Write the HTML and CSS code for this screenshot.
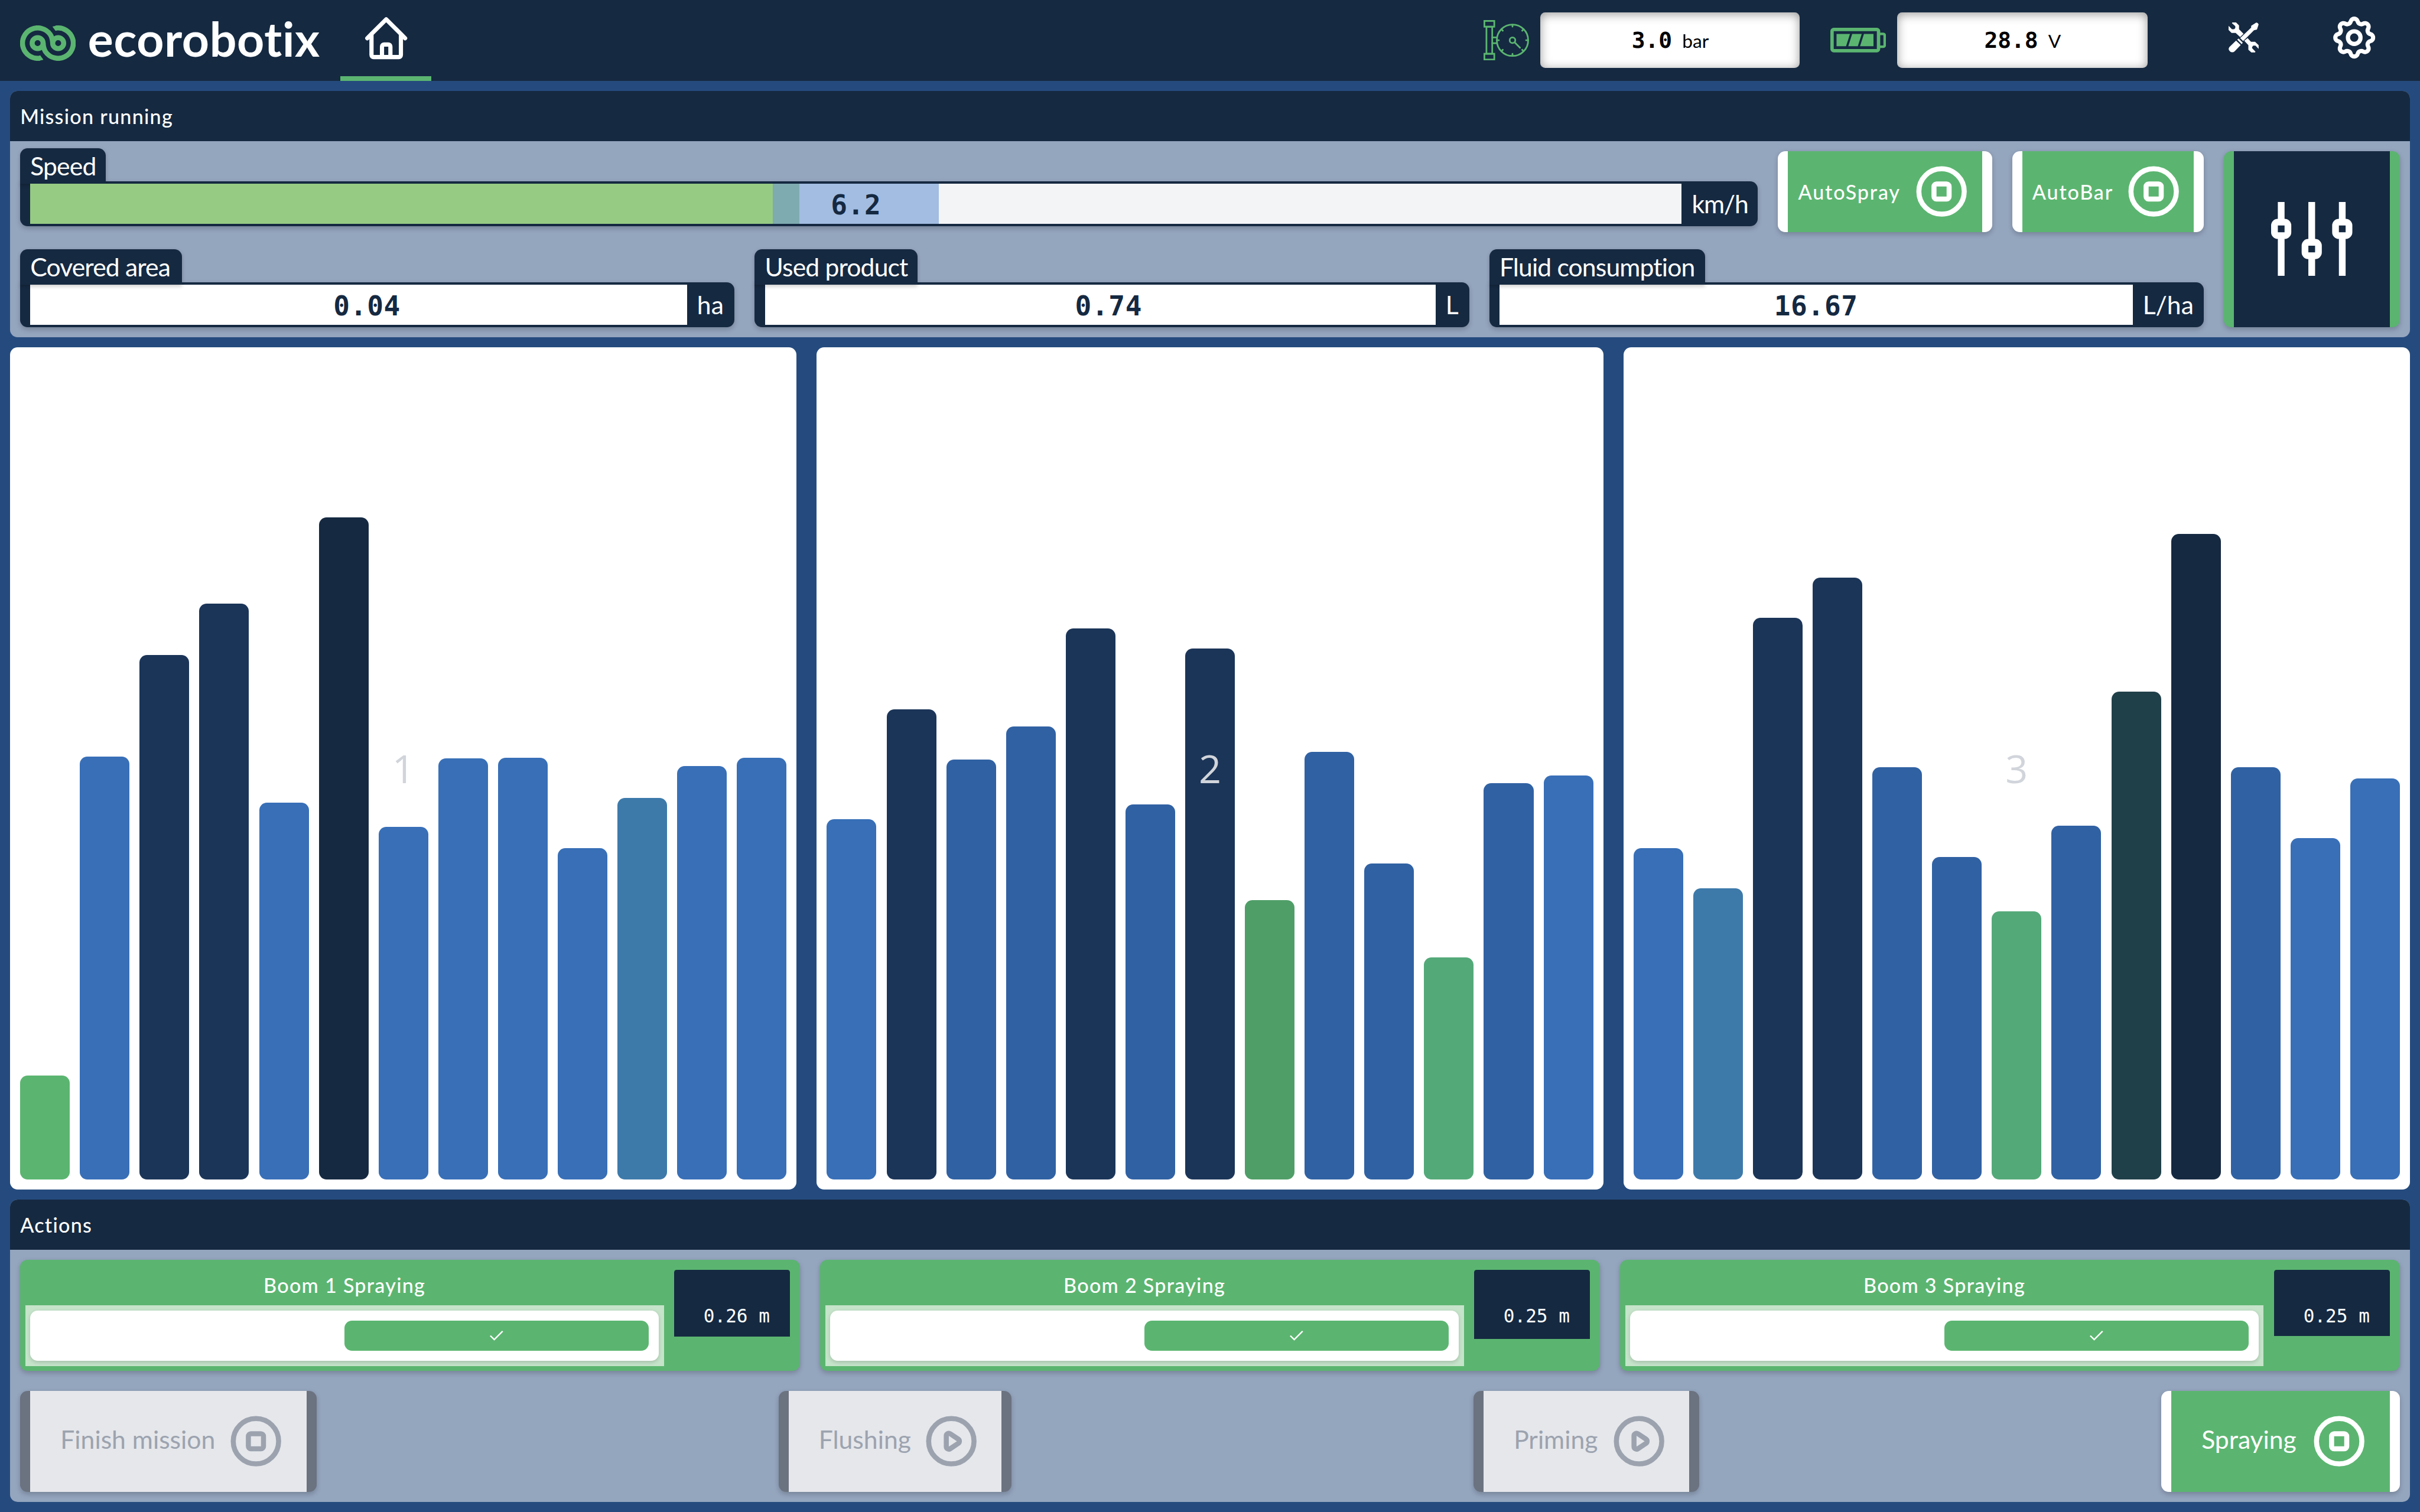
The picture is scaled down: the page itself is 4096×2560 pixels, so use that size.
FILE: index.html
```html
<!DOCTYPE html>
<html lang="en">
<head>
    <meta charset="UTF-8">
    <meta name="viewport" content="width=device-width, initial-scale=1.0">
    <title>ecorobotix</title>
    <link rel="stylesheet" href="styles.css">
</head>
<body>

<!-- shared icons -->
<svg class="sprite" aria-hidden="true">
    <symbol id="icon-stop" viewBox="0 0 24 24">
        <path d="M21 12a9 9 0 11-18 0 9 9 0 0118 0z"/>
        <path d="M9 10a1 1 0 011-1h4a1 1 0 011 1v4a1 1 0 01-1 1h-4a1 1 0 01-1-1v-4z"/>
    </symbol>
    <symbol id="icon-play" viewBox="0 0 24 24">
        <path d="M14.752 11.168l-3.197-2.132A1 1 0 0010 9.87v4.263a1 1 0 001.555.832l3.197-2.132a1 1 0 000-1.664z"/>
        <path d="M21 12a9 9 0 11-18 0 9 9 0 0118 0z"/>
    </symbol>
    <symbol id="icon-check" viewBox="0 0 26 19">
        <path d="M2 10l7 7L24 2"/>
    </symbol>
</svg>

<header class="topbar">
    <div class="logo">
        <svg class="logo-mark" viewBox="0 0 298 190">
            <g fill="none" stroke="currentColor" stroke-width="27">
                <circle cx="94" cy="95" r="29.5"/>
                <circle cx="204" cy="95" r="29.5"/>
                <path d="M106 175.6A81.5 81.5 0 1 1 161 48C170 60 173 76 175 95"/>
                <path d="M192 14.4A81.5 81.5 0 1 1 137 142C128 130 125 114 123 95"/>
            </g>
            <path fill="currentColor" d="M102 189L125 184L108 161L102 162z"/>
            <path fill="currentColor" d="M196 1L173 6L190 29L196 28z"/>
        </svg>
        <span class="logo-text">ecorobotix</span>
    </div>
    <nav class="tab active">
        <svg class="icon" viewBox="0 0 24 24">
            <path d="M3 12l2-2m0 0l7-7 7 7M5 10v10a1 1 0 001 1h3m10-11l2 2m-2-2v10a1 1 0 01-1 1h-3m-6 0a1 1 0 001-1v-4a1 1 0 011-1h2a1 1 0 011 1v4a1 1 0 001 1m-6 0h6"/>
        </svg>
    </nav>

    <div class="status">
        <svg class="gauge" viewBox="0 0 246 216">
            <g fill="none" stroke="currentColor" stroke-width="9" stroke-linecap="round">
                <rect x="4.500" y="4.500" width="53" height="31"/>
                <rect x="15.500" y="35.500" width="31" height="145"/>
                <rect x="4.500" y="180.500" width="53" height="31"/>
                <path d="M47 93h23M47 124h23"/>
                <circle cx="155" cy="108" r="84"/>
                <circle cx="155" cy="108" r="15"/>
                <path d="M166 119l29 29M155 26v9M155 181v9M73 108h9M228 108h9M98 51l5 6M212 51l-5 6M98 165l5-6M212 165l-5-6"/>
            </g>
        </svg>
        <div class="reading reading-bar"><b>3.0</b><span>bar</span></div>
        <svg class="battery" viewBox="0 0 99 44">
            <rect x="3" y="3" width="83" height="38" rx="3" fill="none" stroke="currentColor" stroke-width="6"/>
            <path d="M11 11h24l-7 22H11zM39 11h17l-7 22H32zM60 11h17v22H53z" fill="currentColor"/>
            <path d="M88 11h6q3 0 3 3v17q0 3-3 3h-6" fill="none" stroke="currentColor" stroke-width="4.500"/>
        </svg>
        <div class="reading reading-volt"><b>28.8</b><span>V</span></div>
    </div>
    <svg class="tools" viewBox="0 0 162 162" fill="currentColor">
        <path d="M20 0H40L56 16V36L80 61L62 78L38 56H16L0 40V18L18 36H30L36 30V20L18 4z"/>
        <path d="M84 98L102 84L120 104H142L161 122V142L144 124H132L126 132V138L144 157L142 161H122L106 146V122z"/>
        <path d="M121 18L148 1Q156 0 161 10L152 38L136 42L78 100L62 84L121 28z"/>
        <path d="M46 92L54 86L76 108L70 116z"/>
        <path d="M40 97L65 121L33 154Q22 164 9 157Q-5 146 4 132z"/>
    </svg>
    <svg class="icon gear" viewBox="0 0 24 24">
        <path d="M10.325 4.317c.426-1.756 2.924-1.756 3.350 0a1.724 1.724 0 002.573 1.066c1.543-.94 3.310.826 2.370 2.370a1.724 1.724 0 001.065 2.572c1.756.426 1.756 2.924 0 3.350a1.724 1.724 0 00-1.066 2.573c.94 1.543-.826 3.310-2.370 2.370a1.724 1.724 0 00-2.572 1.065c-.426 1.756-2.924 1.756-3.350 0a1.724 1.724 0 00-2.573-1.066c-1.543.94-3.310-.826-2.370-2.370a1.724 1.724 0 00-1.065-2.572c-1.756-.426-1.756-2.924 0-3.350a1.724 1.724 0 001.066-2.573c-.94-1.543.826-3.310 2.370-2.370.996.608 2.296.07 2.572-1.065z"/>
        <path d="M15 12a3 3 0 11-6 0 3 3 0 016 0z"/>
    </svg>
</header>

<main class="page">
    <section class="panel">
        <h2 class="panel-title">Mission running</h2>
        <div class="mission">
            <div class="mission-data">
                <div class="mission-row">
                    <div class="field field-speed">
                        <div class="field-label label-speed">Speed</div>
                        <div class="field-box">
                            <div class="field-value speed-track">
                                <div class="speed-range" style="width: 55%"></div>
                                <div class="speed-over" style="width: 46.57%"></div>
                                <div class="speed-fill" style="width: 44.98%"></div>
                                <span class="speed-value">6.2</span>
                            </div>
                            <div class="field-unit unit-kmh">km/h</div>
                        </div>
                    </div>
                    <button class="btn btn-green btn-small auto-spray"><span>AutoSpray</span><svg class="btn-icon"><use href="#icon-stop"/></svg></button>
                    <button class="btn btn-green btn-small auto-bar"><span>AutoBar</span><svg class="btn-icon"><use href="#icon-stop"/></svg></button>
                </div>
                <div class="mission-row">
                    <div class="field">
                        <div class="field-label label-area">Covered area</div>
                        <div class="field-box">
                            <div class="field-value"> 0.04</div>
                            <div class="field-unit unit-ha">ha</div>
                        </div>
                    </div>
                    <div class="field">
                        <div class="field-label label-product">Used product</div>
                        <div class="field-box">
                            <div class="field-value"> 0.74</div>
                            <div class="field-unit unit-l">L</div>
                        </div>
                    </div>
                    <div class="field">
                        <div class="field-label label-fluid">Fluid consumption</div>
                        <div class="field-box">
                            <div class="field-value">16.67</div>
                            <div class="field-unit unit-lha">L/ha</div>
                        </div>
                    </div>
                </div>
            </div>
            <button class="btn btn-settings">
                <svg class="sliders" viewBox="0 0 145 132">
                    <g fill="none" stroke="currentColor" stroke-width="12">
                        <path d="M18 0v36M18 60v72M72.500 0v72M72.500 96v36M127 0v36M127 60v72"/>
                        <rect x="6" y="36" width="24" height="24" rx="6"/>
                        <rect x="60.500" y="72" width="24" height="24" rx="6"/>
                        <rect x="115" y="36" width="24" height="24" rx="6"/>
                    </g>
                </svg>
            </button>
        </div>
    </section>

    <section class="charts">
        <div class="chart">
            <div class="bar green" style="height: 12.6%"></div>
            <div class="bar blue" style="height: 51.4%"></div>
            <div class="bar navy" style="height: 63.8%"></div>
            <div class="bar navy" style="height: 70%"></div>
            <div class="bar blue" style="height: 45.8%"></div>
            <div class="bar dark" style="height: 80.5%"></div>
            <div class="bar blue" style="height: 42.9%"></div>
            <div class="bar blue" style="height: 51.2%"></div>
            <div class="bar blue" style="height: 51.3%"></div>
            <div class="bar blue" style="height: 40.3%"></div>
            <div class="bar teal" style="height: 46.4%"></div>
            <div class="bar blue" style="height: 50.3%"></div>
            <div class="bar blue" style="height: 51.3%"></div>
            <span class="chart-number">1</span>
        </div>
        <div class="chart">
            <div class="bar blue" style="height: 43.8%"></div>
            <div class="bar navy" style="height: 57.2%"></div>
            <div class="bar mid" style="height: 51.1%"></div>
            <div class="bar mid" style="height: 55.1%"></div>
            <div class="bar navy" style="height: 67%"></div>
            <div class="bar mid" style="height: 45.6%"></div>
            <div class="bar navy" style="height: 64.6%"></div>
            <div class="bar leaf" style="height: 34%"></div>
            <div class="bar mid" style="height: 52%"></div>
            <div class="bar mid" style="height: 38.4%"></div>
            <div class="bar sea" style="height: 27%"></div>
            <div class="bar mid" style="height: 48.2%"></div>
            <div class="bar blue" style="height: 49.1%"></div>
            <span class="chart-number">2</span>
        </div>
        <div class="chart">
            <div class="bar blue" style="height: 40.3%"></div>
            <div class="bar teal" style="height: 35.4%"></div>
            <div class="bar navy" style="height: 68.3%"></div>
            <div class="bar navy" style="height: 73.2%"></div>
            <div class="bar mid" style="height: 50.1%"></div>
            <div class="bar mid" style="height: 39.2%"></div>
            <div class="bar sea" style="height: 32.6%"></div>
            <div class="bar mid" style="height: 43%"></div>
            <div class="bar pine" style="height: 59.3%"></div>
            <div class="bar dark" style="height: 78.5%"></div>
            <div class="bar mid" style="height: 50.1%"></div>
            <div class="bar blue" style="height: 41.5%"></div>
            <div class="bar blue" style="height: 48.8%"></div>
            <span class="chart-number">3</span>
        </div>
    </section>

    <section class="panel">
        <h2 class="panel-title">Actions</h2>
        <div class="actions">
            <div class="booms">
                <div class="boom">
                    <div class="boom-main">
                        <div class="boom-title">Boom 1 Spraying</div>
                        <div class="boom-switch">
                            <div class="switch"><div class="switch-knob"><svg class="check"><use href="#icon-check"/></svg></div></div>
                        </div>
                    </div>
                    <div class="boom-height" style="height: 66.1%">0.26 m</div>
                </div>
                <div class="boom">
                    <div class="boom-main">
                        <div class="boom-title">Boom 2 Spraying</div>
                        <div class="boom-switch">
                            <div class="switch"><div class="switch-knob"><svg class="check"><use href="#icon-check"/></svg></div></div>
                        </div>
                    </div>
                    <div class="boom-height" style="height: 68.3%">0.25 m</div>
                </div>
                <div class="boom">
                    <div class="boom-main">
                        <div class="boom-title">Boom 3 Spraying</div>
                        <div class="boom-switch">
                            <div class="switch"><div class="switch-knob"><svg class="check"><use href="#icon-check"/></svg></div></div>
                        </div>
                    </div>
                    <div class="boom-height" style="height: 65.5%">0.25 m</div>
                </div>
            </div>
            <div class="commands">
                <button class="btn btn-off finish"><span>Finish mission</span><svg class="btn-icon"><use href="#icon-stop"/></svg></button>
                <button class="btn btn-off flushing"><span>Flushing</span><svg class="btn-icon"><use href="#icon-play"/></svg></button>
                <button class="btn btn-off priming"><span>Priming</span><svg class="btn-icon"><use href="#icon-play"/></svg></button>
                <button class="btn btn-green spraying"><span>Spraying</span><svg class="btn-icon"><use href="#icon-stop"/></svg></button>
            </div>
        </div>
    </section>
</main>

</body>
</html>
```
FILE: styles.css
```css
* {
    box-sizing: border-box;
    margin: 0;
    padding: 0;
}
/* the whole screen scales with the display: 120rem wide */
html {
    font-size: calc(100vw / 120);
}
body {
    font-family: Lato, "Liberation Sans", sans-serif;
    background-color: #254b7e;
    color: #ffffff;
    height: 75rem;
    display: flex;
    flex-direction: column;
    overflow: hidden;
}
.sprite {
    display: none;
}

/* top bar */
.topbar {
    height: 4rem;
    padding: 0 2rem 0 1rem;
    background-color: #152941;
    display: flex;
    align-items: center;
}
.logo {
    width: 15.889rem;
    display: flex;
    align-items: center;
    padding-top: 0.25rem;
}
.logo-mark {
    width: 2.759rem;
    height: 1.759rem;
    color: #5bb570;
}
.logo-text {
    font-size: 2.36rem;
    font-weight: 700;
    letter-spacing: 0.02rem;
    line-height: 1;
    margin-left: 0.6rem;
    margin-bottom: 0.42rem;
    white-space: nowrap;
}
.tab {
    width: 4.5rem;
    height: 4rem;
    display: flex;
    align-items: center;
    justify-content: center;
    border-bottom: 0.25rem solid transparent;
}
.tab.active {
    border-color: #5bb570;
}
.icon {
    width: 2.5rem;
    height: 2.5rem;
    fill: none;
    stroke: currentColor;
    stroke-width: 2;
    stroke-linecap: round;
    stroke-linejoin: round;
}
.status {
    display: flex;
    align-items: center;
    margin-left: auto;
    color: #5bb570;
}
.gauge {
    width: 2.278rem;
    height: 2rem;
    margin-right: 0.55rem;
}
.battery {
    width: 2.75rem;
    height: 1.222rem;
    margin: 0 0.583rem 0 1.5rem;
}
.reading {
    height: 2.75rem;
    border-radius: 0.25rem;
    background-color: #ffffff;
    box-shadow: inset 0 0.083rem 0.5rem rgba(0, 0, 0, 0.4);
    color: #000000;
    display: flex;
    align-items: baseline;
    justify-content: center;
    line-height: 2.8rem;
}
.reading b {
    font-family: "DejaVu Sans Mono", monospace;
    font-size: 1.111rem;
}
.reading span {
    font-size: 0.93rem;
    margin-left: 0.5rem;
}
.reading-bar {
    width: 12.861rem;
}
.reading-volt {
    width: 12.417rem;
}
.tools {
    width: 1.5rem;
    height: 1.5rem;
    margin: -0.25rem 3.5rem 0 4rem;
}
.gear {
    margin-top: -0.25rem;
}

/* panels */
.page {
    flex: 1;
    min-height: 0;
    padding: 0.5rem;
    display: flex;
    flex-direction: column;
    gap: 0.5rem;
}
.panel {
    border-radius: 0.375rem;
    background-color: #94a5be;
    overflow: hidden;
    flex: none;
}
.panel-title {
    height: 2.5rem;
    padding: 0 0.5rem;
    background-color: #152941;
    font-size: 1rem;
    font-weight: 500;
    letter-spacing: 0.037rem;
    line-height: 2.5rem;
}

/* mission */
.mission {
    padding: 0.5rem;
    display: flex;
    gap: 1rem;
}
.mission-data {
    flex: 1;
    display: flex;
    flex-direction: column;
    gap: 1rem;
}
.mission-row {
    display: flex;
    align-items: flex-start;
    gap: 1rem;
}
.field {
    flex: 1 1 0;
}
.field-label {
    position: relative;
    height: 1.75rem;
    margin-top: -0.139rem;
    margin-bottom: -0.111rem;
    padding-left: 0.5rem;
    border-radius: 0.375rem 0.375rem 0 0;
    background-color: #152941;
    box-shadow: 0 0.08rem 0.2rem rgba(0, 0, 0, 0.2);
    font-size: 1.25rem;
    letter-spacing: -0.025rem;
    line-height: 1.75rem;
    white-space: nowrap;
}
.label-speed {
    width: 4.25rem;
}
.label-area {
    width: 8.028rem;
}
.label-product {
    width: 8.083rem;
}
.label-fluid {
    width: 10.694rem;
}
.field-box {
    height: 2.222rem;
    padding: 0.111rem 0 0.111rem 0.5rem;
    border-radius: 0 0.375rem 0.375rem 0.375rem;
    background-color: #152941;
    box-shadow: 0 0.1rem 0.25rem rgba(0, 0, 0, 0.2);
    display: flex;
}
.field-value {
    flex: 1;
    background-color: #ffffff;
    color: #152941;
    font-family: "DejaVu Sans Mono", monospace;
    font-size: 1.35rem;
    font-weight: 700;
    letter-spacing: 0.02rem;
    line-height: 2.12rem;
    text-align: center;
    white-space: pre;
}
.field-unit {
    padding-left: 0.5rem;
    font-size: 1.25rem;
    line-height: 2rem;
    white-space: nowrap;
}
.unit-kmh {
    width: 3.778rem;
    letter-spacing: -0.035rem;
}
.unit-ha {
    width: 2.361rem;
}
.unit-l {
    width: 1.667rem;
}
.unit-lha {
    width: 3.528rem;
}
.speed-track {
    position: relative;
    background-color: #f3f4f6;
    white-space: normal;
}
.speed-range,
.speed-over,
.speed-fill {
    position: absolute;
    top: 0;
    left: 0;
    height: 100%;
}
.speed-range {
    background-color: #a2bde1;
}
.speed-over {
    background-color: #7eabb0;
}
.speed-fill {
    background-color: #96cb83;
}
.speed-value {
    position: relative;
}

/* buttons */
.btn {
    height: 5rem;
    padding: 0 1rem 0 1.5rem;
    border: solid;
    border-width: 0 0.5rem;
    border-radius: 0.375rem;
    box-shadow: 0 0.1rem 0.25rem rgba(0, 0, 0, 0.2);
    font-family: inherit;
    font-size: 1.25rem;
    display: flex;
    align-items: center;
    justify-content: space-between;
    white-space: nowrap;
}
.btn span {
    margin-bottom: 0.22rem;
}
.btn-small {
    height: 4rem;
    padding: 0 0.5rem;
    font-size: 1rem;
    font-weight: 500;
    letter-spacing: 0.053rem;
}
.btn-small span {
    margin-bottom: 0;
}
.btn-green {
    background-color: #5bb570;
    border-color: #ffffff;
    color: #ffffff;
}
.btn-off {
    background-color: #e5e7eb;
    border-color: #6b7280;
    color: #9ca3af;
}
.btn-icon {
    width: 3rem;
    height: 3rem;
    flex: none;
    fill: none;
    stroke: currentColor;
    stroke-width: 2;
    stroke-linecap: round;
    stroke-linejoin: round;
}
.auto-spray {
    width: 10.611rem;
}
.auto-bar {
    width: 9.5rem;
}
.btn-settings {
    width: 8.722rem;
    height: 8.722rem;
    padding: 0;
    justify-content: center;
    background-color: #152941;
    border-color: #5bb570;
    color: #ffffff;
}
.sliders {
    width: 4.028rem;
    height: 3.667rem;
}

/* charts */
.charts {
    flex: 1;
    min-height: 0;
    display: flex;
    gap: 1rem;
}
.chart {
    position: relative;
    flex: 1;
    padding: 0.5rem;
    border-radius: 0.375rem;
    background-color: #ffffff;
    display: flex;
    align-items: flex-end;
    gap: 0.5rem;
}
.bar {
    flex: 1;
    border-radius: 0.375rem;
}
.green { background-color: #5bb570; }
.leaf { background-color: #4f9e68; }
.sea { background-color: #54a979; }
.teal { background-color: #3d7aaa; }
.blue { background-color: #386fb7; }
.mid { background-color: #3061a3; }
.navy { background-color: #1b3558; }
.dark { background-color: #152941; }
.pine { background-color: #204049; }
.chart-number {
    position: absolute;
    inset: 0;
    display: flex;
    align-items: center;
    justify-content: center;
    color: #d1d5db;
    font-family: "Open Sans", "Noto Sans", sans-serif;
    font-size: 1.95rem;
    font-weight: 500;
}

/* actions */
.actions {
    padding: 0.5rem;
    display: flex;
    flex-direction: column;
    gap: 1rem;
}
.booms {
    display: flex;
    gap: 1rem;
}
.boom {
    flex: 1;
    height: 5.5rem;
    padding: 0.25rem 0.5rem 0.25rem 0.25rem;
    border-radius: 0.375rem;
    background-color: #5bb570;
    box-shadow: 0 0.1rem 0.25rem rgba(0, 0, 0, 0.2);
    display: flex;
    gap: 0.5rem;
}
.boom-main {
    flex: 1;
}
.boom-title {
    height: 2rem;
    font-weight: 500;
    letter-spacing: 0.037rem;
    line-height: 2rem;
    text-align: center;
}
.boom-switch {
    padding: 0.25rem;
    background-color: #c5e4ca;
}
.switch {
    height: 2.5rem;
    padding: 0.5rem;
    border-radius: 0.375rem;
    background-color: #ffffff;
    box-shadow: 0 0.08rem 0.2rem rgba(0, 0, 0, 0.15);
    display: flex;
    justify-content: flex-end;
}
.switch-knob {
    width: 50%;
    border-radius: 0.375rem;
    background-color: #5bb570;
    display: flex;
    align-items: center;
    justify-content: center;
}
.check {
    width: 0.722rem;
    height: 0.528rem;
    fill: none;
    stroke: #ffffff;
    stroke-width: 2.5;
}
.boom-height {
    width: 5.75rem;
    margin-top: 0.25rem;
    padding: 1.54rem 0 0 1.47rem;
    border-radius: 0.125rem 0.125rem 0 0;
    background-color: #152941;
    font-family: "DejaVu Sans Mono", monospace;
    font-size: 0.91rem;
    line-height: 1.5rem;
    white-space: nowrap;
}
.commands {
    display: flex;
    justify-content: space-between;
}
.finish {
    width: 14.694rem;
}
.flushing {
    width: 11.556rem;
}
.priming {
    width: 11.194rem;
}
.spraying {
    width: 11.833rem;
}
```
